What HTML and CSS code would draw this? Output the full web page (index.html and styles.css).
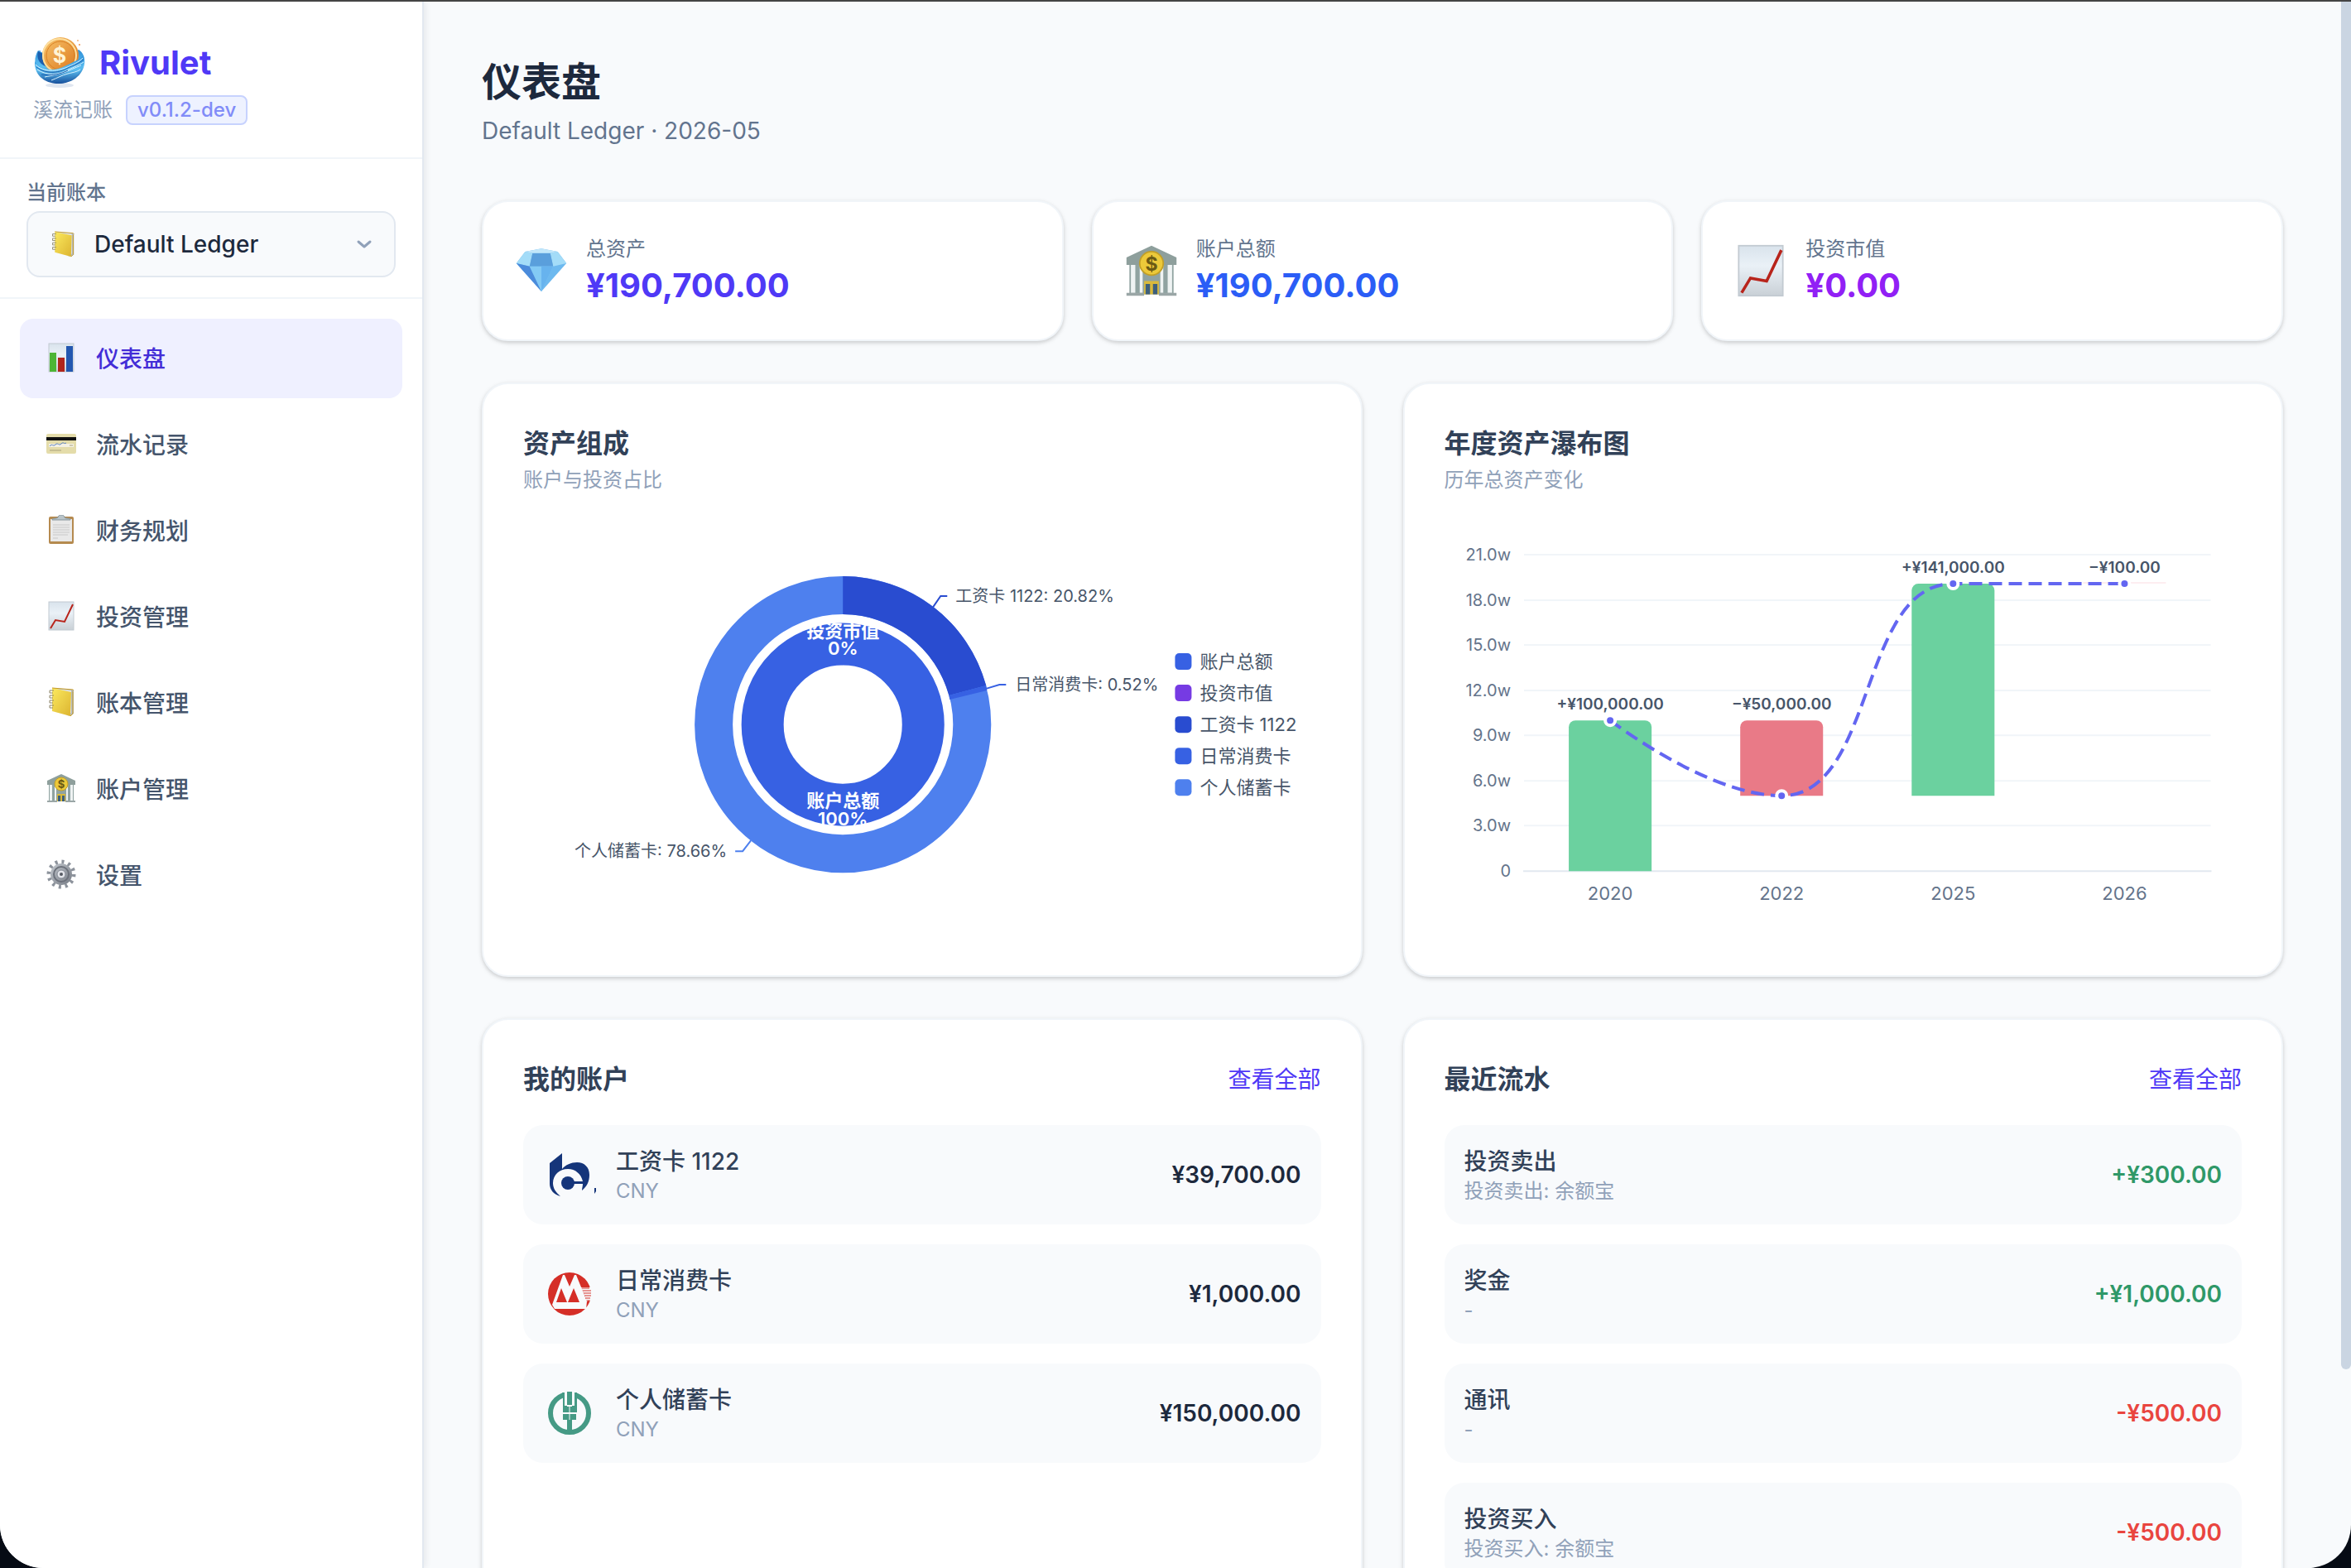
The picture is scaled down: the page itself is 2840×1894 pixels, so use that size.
FILE: index.html
```html
<!DOCTYPE html>
<html lang="zh-CN">
<head>
    <meta charset="UTF-8">
    <meta name="viewport" content="width=device-width, initial-scale=1.0">
    <title>Rivulet 溪流记账 - 仪表盘</title>
    <link rel="stylesheet" href="styles.css">
</head>
<body>
    <!-- 图标定义 -->
    <svg class="defs" width="0" height="0" aria-hidden="true">
        <defs>
            <linearGradient id="paper" x1="0" y1="0" x2="0" y2="1"><stop offset="0" stop-color="#d9e3ec"/><stop offset=".4" stop-color="#eaf1f7"/><stop offset="1" stop-color="#c9d0d6"/></linearGradient>
            <linearGradient id="gold" x1="0" y1="0" x2="1" y2="1"><stop offset="0" stop-color="#fbe95e"/><stop offset="1" stop-color="#dcb430"/></linearGradient>
            <linearGradient id="coin" x1="0" y1="0" x2="1" y2="1"><stop offset="0" stop-color="#f9c56b"/><stop offset="1" stop-color="#d9741a"/></linearGradient>
            <linearGradient id="water" x1="0" y1="0" x2="0" y2="1"><stop offset="0" stop-color="#2f8fd8"/><stop offset=".5" stop-color="#5cc0f2"/><stop offset="1" stop-color="#17509c"/></linearGradient>
            <linearGradient id="steel" x1="0" y1="0" x2="1" y2="1"><stop offset="0" stop-color="#c3c8ce"/><stop offset="1" stop-color="#747a83"/></linearGradient>
            <symbol id="i-chart" viewBox="0 0 36 36">
                <rect x="3" y="1" width="30" height="34" fill="url(#paper)" stroke="#c2cad1"/>
                <rect x="4" y="12" width="8" height="23" fill="#4db536"/>
                <rect x="14" y="18" width="8" height="17" fill="#b0251c"/>
                <rect x="24" y="4" width="8" height="31" fill="#2357b0"/>
            </symbol>
            <symbol id="i-card" viewBox="0 0 36 36">
                <rect x="0" y="6" width="36" height="24" rx="2" fill="#e4dcaa"/>
                <rect x="0" y="10" width="36" height="4" fill="#111"/>
                <rect x="3" y="18" width="30" height="4" fill="#f4f1e4"/>
                <path d="M4 21c3-4 4 1 7-2s4 2 7-1 3 1 6-1" fill="none" stroke="#5a82c4"/>
                <path d="M28 20h4M4 26h14" stroke="#a9a27a"/>
            </symbol>
            <symbol id="i-board" viewBox="0 0 36 36">
                <rect x="3" y="2" width="30" height="33" rx="2" fill="#b58a4f"/>
                <rect x="5" y="5" width="26" height="27" fill="#e9e9e9"/>
                <path d="M8 12h20M8 15h20M8 18h20M8 21h20M8 24h18M8 28h6" stroke="#c9c9c9"/>
                <path d="M7 6c0-3 5-1 7-3 0-4 8-4 8 0 2 2 7 0 7 3z" fill="#b9c4c9" stroke="#87969c"/>
            </symbol>
            <symbol id="i-trend" viewBox="0 0 36 36">
                <rect x="3" y="1" width="30" height="34" fill="url(#paper)" stroke="#c2cad1"/>
                <path d="M5 33l6-10 11 2L32 4" fill="none" stroke="#b8241b" stroke-width="2"/>
            </symbol>
            <symbol id="i-book" viewBox="0 0 36 36">
                <path d="M7 1l25 2 1 1v28l-4 3-4-1z" fill="#b5bbbf"/>
                <path d="M10 2l20 2v27l-3 2z" fill="#e4e7e9"/>
                <path d="M7 1l23 5-1 29-22-6z" fill="url(#gold)"/>
                <path d="M7 1l25 2 1 1M32 5v27l-3 3" fill="none" stroke="#c79a1e"/>
                <path d="M9 4H4v3h4M9 10H4v3h4M9 16H4v3h4M9 22H4v3h4" fill="none" stroke="#8c8468"/>
            </symbol>
            <symbol id="i-bank" viewBox="0 0 36 36">
                <path d="M1 9L18 1l17 8v5H1z" fill="#8e9f9c"/>
                <path d="M3 14h30v20H3z" fill="#90a3a1"/>
                <path d="M4 14h3v19H4zM10 14h2v19h-2zM24 14h2v19h-2zM29 14h3v19h-3z" fill="#eff3f3"/>
                <path d="M1 33h12v2H1zM23 33h12v2H23z" fill="#9aa6a6"/>
                <path d="M13 25h10v9H13z" fill="#d9b93b"/>
                <path d="M14 27h3v7h-3zM19 27h3v7h-3z" fill="#3d5f7c"/>
                <circle cx="18" cy="13" r="8" fill="#ecc93a" stroke="#c29f27"/>
                <text x="18" y="18" class="coin-sign">$</text>
            </symbol>
            <symbol id="i-gear" viewBox="0 0 36 36">
                <circle cx="18" cy="18" r="15" fill="none" stroke="#8d939c" stroke-width="5" stroke-dasharray="3 4.854"/>
                <circle cx="18" cy="18" r="13" fill="url(#steel)"/>
                <circle cx="18" cy="18" r="9" fill="none" stroke="#6c717b" stroke-width="2"/>
                <circle cx="18" cy="18" r="5" fill="#e3e5ea" stroke="#868c97"/>
                <circle cx="18" cy="18" r="2" fill="#555a63"/>
            </symbol>
            <symbol id="i-gem" viewBox="0 0 36 36">
                <path d="M7 5l11-2 11 2 6 8-17 19L1 13z" fill="#6db9ef"/>
                <path d="M7 5l5 1-2 9-9-2zM29 5l-5 1 2 9 9-2z" fill="#a3dcf8"/>
                <path d="M12 6h12l2 9H10z" fill="#5a9fdc"/>
                <path d="M7 5l11-2 11 2-5 1H12z" fill="#c2e7fa"/>
                <path d="M1 13l9 2 8 17z" fill="#4b8bdb"/>
                <path d="M10 15h16l-8 17z" fill="#83caf5"/>
                <path d="M18 15l8 0-8 17z" fill="#67b3ee"/>
            </symbol>
        </defs>
    </svg>

    <div class="app">
        <aside class="sidebar">
            <div class="brand">
                <div class="brand-row">
                    <svg class="brand-logo" viewBox="0 0 64 64" aria-hidden="true">
                        <ellipse cx="32" cy="59" rx="17" ry="3" fill="#dfe6f0"/>
                        <path d="M6 17C-2 30 2 50 28 57c22 1 36-14 34-30-1-6-4-9-7-11L32 30z" fill="url(#water)"/>
                        <path d="M6 18c-3 12 5 18 16 20l-8-16z" fill="#1c5fae"/>
                        <circle cx="33" cy="23" r="22" fill="url(#coin)"/>
                        <circle cx="32" cy="23" r="20" fill="none" stroke="#fde0a0" stroke-width="2"/>
                        <circle cx="33" cy="23" r="17" fill="none" stroke="#d98125"/>
                        <text x="32" y="32" class="logo-sign">$</text>
                        <path d="M2 30c8 12 24 12 36 6s18-8 23-13c2 18-12 33-30 34C12 57 1 45 2 30z" fill="url(#water)"/>
                        <path d="M3 34c10 10 26 8 36 4s16-7 21-12M5 40c12 8 26 6 36 1s14-6 20-10M14 49c10-2 22-4 30-8s10-4 14-6M22 53c8-3 12-6 20-8s10-2 15-5" fill="none" stroke="#d9f2fd" stroke-width="1"/>
                        <path d="M4 37c12 9 26 7 36 2s15-6 21-11M10 46c14 2 24-1 32-5" fill="none" stroke="#1d62b0"/>
                        <circle cx="56" cy="10" r="1" fill="#f0914d"/><circle cx="54" cy="5" r="1" fill="#f3b27f"/><circle cx="8" cy="18" r="1" fill="#3f9be0"/>
                    </svg>
                    <span class="brand-name">Rivulet</span>
                </div>
                <div class="brand-meta">
                    <span>溪流记账</span>
                    <span class="version">v0.1.2-dev</span>
                </div>
            </div>

            <div class="ledger">
                <label for="ledgerSelect">当前账本</label>
                <div class="select-wrap">
                    <svg class="select-icon" aria-hidden="true"><use href="#i-book"/></svg>
                    <select id="ledgerSelect">
                        <option>Default Ledger</option>
                    </select>
                    <svg class="select-arrow" viewBox="0 0 20 12" aria-hidden="true"><path d="M3 3l7 6 7-6" fill="none" stroke="#90a1b9" stroke-width="3" stroke-linecap="round" stroke-linejoin="round"/></svg>
                </div>
            </div>

            <nav class="menu">
                <a href="#dashboard" class="active"><svg aria-hidden="true"><use href="#i-chart"/></svg>仪表盘</a>
                <a href="#records"><svg aria-hidden="true"><use href="#i-card"/></svg>流水记录</a>
                <a href="#plan"><svg aria-hidden="true"><use href="#i-board"/></svg>财务规划</a>
                <a href="#invest"><svg aria-hidden="true"><use href="#i-trend"/></svg>投资管理</a>
                <a href="#ledgers"><svg aria-hidden="true"><use href="#i-book"/></svg>账本管理</a>
                <a href="#accounts"><svg aria-hidden="true"><use href="#i-bank"/></svg>账户管理</a>
                <a href="#settings"><svg aria-hidden="true"><use href="#i-gear"/></svg>设置</a>
            </nav>
        </aside>

        <main class="content">
            <header class="page-header">
                <h1>仪表盘</h1>
                <p>Default Ledger · 2026-05</p>
            </header>

            <section class="stats">
                <div class="card stat">
                    <svg aria-hidden="true"><use href="#i-gem"/></svg>
                    <div>
                        <div class="stat-label">总资产</div>
                        <div class="stat-value indigo">¥190,700.00</div>
                    </div>
                </div>
                <div class="card stat">
                    <svg aria-hidden="true"><use href="#i-bank"/></svg>
                    <div>
                        <div class="stat-label">账户总额</div>
                        <div class="stat-value blue">¥190,700.00</div>
                    </div>
                </div>
                <div class="card stat">
                    <svg aria-hidden="true"><use href="#i-trend"/></svg>
                    <div>
                        <div class="stat-label">投资市值</div>
                        <div class="stat-value purple">¥0.00</div>
                    </div>
                </div>
            </section>

            <section class="panels">
                <div class="card panel">
                    <h2>资产组成</h2>
                    <p class="hint">账户与投资占比</p>
                    <!-- 双层环形图 -->
                    <svg class="chart" viewBox="0 0 963 518" role="img" aria-label="资产组成">
                        <circle cx="386" cy="263" r="156" fill="none" stroke="#4e80ee" stroke-width="46"/>
                        <path d="M386 84A179 179 0 0 1 559 216L514 228A133 133 0 0 0 386 130z" fill="#294cd0"/>
                        <path d="M559 216A179 179 0 0 1 560 222L515 233A133 133 0 0 0 514 228z" fill="#3761e3"/>
                        <circle cx="386" cy="263" r="97" fill="none" stroke="#3761e3" stroke-width="51"/>
                        <g fill="none" stroke-width="2">
                            <path d="M495 121l9-13h8" stroke="#294cd0"/>
                            <path d="M558 220l17-5h8" stroke="#3761e3"/>
                            <path d="M275 403l-10 13h-9" stroke="#4e80ee"/>
                        </g>
                        <g class="slice-label">
                            <text x="522" y="115">工资卡 1122: 20.82%</text>
                            <text x="594" y="222">日常消费卡: 0.52%</text>
                            <text x="246" y="423" text-anchor="end">个人储蓄卡: 78.66%</text>
                        </g>
                        <g class="ring-label">
                            <text x="386" y="158">投资市值</text>
                            <text x="386" y="179">0%</text>
                            <text x="386" y="363">账户总额</text>
                            <text x="386" y="385">100%</text>
                        </g>
                        <g>
                            <rect x="787" y="177" width="20" height="20" rx="5" fill="#3761e3"/>
                            <rect x="787" y="215" width="20" height="20" rx="5" fill="#763be3"/>
                            <rect x="787" y="253" width="20" height="20" rx="5" fill="#294cd0"/>
                            <rect x="787" y="291" width="20" height="20" rx="5" fill="#3761e3"/>
                            <rect x="787" y="329" width="20" height="20" rx="5" fill="#4e80ee"/>
                        </g>
                        <g class="legend-label">
                            <text x="817" y="195">账户总额</text>
                            <text x="817" y="233">投资市值</text>
                            <text x="817" y="271">工资卡 1122</text>
                            <text x="817" y="309">日常消费卡</text>
                            <text x="817" y="347">个人储蓄卡</text>
                        </g>
                    </svg>
                </div>

                <div class="card panel">
                    <h2>年度资产瀑布图</h2>
                    <p class="hint">历年总资产变化</p>
                    <!-- 瀑布图 -->
                    <svg class="chart" viewBox="0 0 963 518" role="img" aria-label="年度资产瀑布图">
                        <path d="M96 58h829M96 113h829M96 167h829M96 222h829M96 276h829M96 331h829M96 385h829" stroke="#f1f5f9" stroke-width="2"/>
                        <path d="M95 440h831" stroke="#e2e8f0" stroke-width="2"/>
                        <g class="axis-y">
                            <text x="80" y="65">21.0w</text>
                            <text x="80" y="120">18.0w</text>
                            <text x="80" y="174">15.0w</text>
                            <text x="80" y="229">12.0w</text>
                            <text x="80" y="283">9.0w</text>
                            <text x="80" y="338">6.0w</text>
                            <text x="80" y="392">3.0w</text>
                            <text x="80" y="447">0</text>
                        </g>
                        <g class="axis-x">
                            <text x="200" y="475">2020</text>
                            <text x="407" y="475">2022</text>
                            <text x="614" y="475">2025</text>
                            <text x="821" y="475">2026</text>
                        </g>
                        <path d="M150 440V266a8 8 0 0 1 8-8h84a8 8 0 0 1 8 8V440z" fill="#6bd19f"/>
                        <path d="M357 349V266a8 8 0 0 1 8-8h84a8 8 0 0 1 8 8V349z" fill="#e97a87"/>
                        <path d="M564 349V101a8 8 0 0 1 8-8h84a8 8 0 0 1 8 8V349z" fill="#6bd19f"/>
                        <path d="M771 92h100" stroke="#fbdce2"/>
                        <path d="M200 258C200 258 318 349 407 349C521 349 500 93 614 93H821" fill="none" stroke="#6366f1" stroke-width="4" stroke-dasharray="16 8"/>
                        <g fill="#6366f1" stroke="#fff" stroke-width="4">
                            <circle cx="200" cy="258" r="6"/>
                            <circle cx="407" cy="349" r="6"/>
                            <circle cx="614" cy="93" r="6"/>
                            <circle cx="821" cy="93" r="6"/>
                        </g>
                        <g class="bar-label">
                            <text x="200" y="245">+¥100,000.00</text>
                            <text x="407" y="245">−¥50,000.00</text>
                            <text x="614" y="80">+¥141,000.00</text>
                            <text x="821" y="80">−¥100.00</text>
                        </g>
                    </svg>
                </div>

                <div class="card panel">
                    <div class="panel-head">
                        <h2>我的账户</h2>
                        <a href="#accounts">查看全部</a>
                    </div>
                    <ul class="rows">
                        <li>
                            <svg class="bank-logo" viewBox="0 0 64 64" aria-hidden="true">
                                <path d="M23 6L8 18V43c0 7 5 13 13 15-6-5-9-10-9-16 0-10 8-17 18-17 9 0 16 6 18 15H37v3h11c0 3-1 5-1 8 6-5 9-11 9-19 0-9-6-15-15-15-7 0-14 3-18 8z" fill="#15357a"/>
                                <circle cx="30" cy="42" r="8" fill="#15357a"/>
                                <path d="M62 48h2v4l-2 3z" fill="#15357a"/>
                            </svg>
                            <div class="row-text"><strong>工资卡 1122</strong><span>CNY</span></div>
                            <b>¥39,700.00</b>
                        </li>
                        <li>
                            <svg class="bank-logo" viewBox="0 0 64 64" aria-hidden="true">
                                <circle cx="32" cy="32" r="26" fill="#d52e27"/>
                                <path d="M11 45L24 9h2l6 14 6-14h2l13 32-1 9H14z" fill="#f8fafc"/>
                                <path d="M16 42l6-17 7 17zM30 42l7-17 7 17z" fill="#d52e27"/>
                                <path d="M46 24h12v15l-5 2z" fill="#f8fafc"/>
                                <path d="M47 25h9M48 28h10M49 31h9M50 34h8M51 37h6M53 40h3" stroke="#d52e27"/>
                            </svg>
                            <div class="row-text"><strong>日常消费卡</strong><span>CNY</span></div>
                            <b>¥1,000.00</b>
                        </li>
                        <li>
                            <svg class="bank-logo" viewBox="0 0 64 64" aria-hidden="true">
                                <circle cx="32" cy="32" r="23" fill="none" stroke="#459a85" stroke-width="6"/>
                                <path d="M25 4h14v24H25z" fill="#f8fafc"/>
                                <path d="M29 6h6v16h-6z" fill="#459a85"/>
                                <path d="M23 7h3v16h3v1h6v-1h3V7h3v24H24V10zM24 33h16v7h-5v17h-6V40h-5z" fill="#459a85"/>
                                <path d="M32 24v16" stroke="#f8fafc"/>
                            </svg>
                            <div class="row-text"><strong>个人储蓄卡</strong><span>CNY</span></div>
                            <b>¥150,000.00</b>
                        </li>
                    </ul>
                </div>

                <div class="card panel">
                    <div class="panel-head">
                        <h2>最近流水</h2>
                        <a href="#records">查看全部</a>
                    </div>
                    <ul class="rows">
                        <li>
                            <div class="row-text"><strong>投资卖出</strong><span>投资卖出: 余额宝</span></div>
                            <b class="income">+¥300.00</b>
                        </li>
                        <li>
                            <div class="row-text"><strong>奖金</strong><span>-</span></div>
                            <b class="income">+¥1,000.00</b>
                        </li>
                        <li>
                            <div class="row-text"><strong>通讯</strong><span>-</span></div>
                            <b class="expense">-¥500.00</b>
                        </li>
                        <li>
                            <div class="row-text"><strong>投资买入</strong><span>投资买入: 余额宝</span></div>
                            <b class="expense">-¥500.00</b>
                        </li>
                    </ul>
                </div>
            </section>
        </main>
        <div class="scroll-thumb"></div>
    </div>
</body>
</html>
```
FILE: styles.css
```css
* { box-sizing: border-box; margin: 0; padding: 0; }
body { font-family: Inter, "Noto Sans CJK SC", sans-serif; font-size: 28px; color: #1d293d; background: #060b14; overflow: hidden; }
a { text-decoration: none; }
ul { list-style: none; }
.defs { position: absolute; }

.app { position: relative; display: flex; height: 100vh; overflow: hidden; background: #f8fafc; border-top: 2px solid #444; border-radius: 0 0 52px 52px; }

/* 侧边栏 */
.sidebar { position: relative; flex: none; width: 512px; background: #fff; border-right: 2px solid #e2e8f0; box-shadow: 2px 0 8px rgba(15, 23, 42, 0.08); }
.brand { padding: 42px 40px 39px; border-bottom: 2px solid #f1f5f9; }
.brand-row { display: flex; align-items: center; gap: 16px; height: 64px; }
.brand-logo { width: 64px; height: 64px; }
.brand-name { font-size: 40px; font-weight: 700; line-height: 48px; color: #4f39f6; }
.logo-sign { font-size: 25px; font-weight: 700; text-anchor: middle; fill: #fff4d6; }
.coin-sign { font-size: 13px; font-weight: 700; text-anchor: middle; fill: #6b5a14; }
.brand-meta { display: flex; align-items: center; gap: 16px; margin-top: 7px; font-size: 24px; line-height: 36px; color: #90a1b9; }
.version { padding: 0 12px; font-size: 24px; font-weight: 500; line-height: 32px; color: #818cf8; background: #eef2ff; border: 2px solid #c7d2fe; border-radius: 8px; }

.ledger { padding: 25px 32px 24px; border-bottom: 2px solid #f1f5f9; }
.ledger label { display: block; margin-bottom: 6px; font-size: 24px; font-weight: 500; line-height: 32px; color: #62748e; }
.select-wrap { position: relative; }
.select-wrap select { display: block; width: 100%; height: 80px; padding: 0 80px; font: inherit; font-weight: 500; color: #1d293d; background: #f8fafc; border: 2px solid #e2e8f0; border-radius: 16px; appearance: none; }
.select-icon { position: absolute; left: 28px; top: 24px; width: 32px; height: 32px; }
.select-arrow { position: absolute; right: 28px; top: 34px; width: 20px; height: 12px; }

.menu { display: flex; flex-direction: column; gap: 8px; padding: 24px; }
.menu a { display: flex; align-items: center; gap: 24px; height: 96px; padding: 0 32px 2px; font-weight: 500; color: #45556c; border-radius: 16px; }
.menu a.active { color: #432dd7; background: #eff0ff; }
.menu svg { width: 36px; height: 36px; }

/* 主内容 */
.content { flex: 1; min-width: 0; padding: 69px 82px 70px 70px; }
.page-header { margin-bottom: 64px; }
.page-header h1 { font-size: 48px; font-weight: 700; line-height: 56px; }
.page-header p { line-height: 40px; margin-top: 11px; color: #62748e; }

.card { background: #fff; border: 2px solid #f1f5f9; border-radius: 32px; box-shadow: 0 2px 6px rgba(0, 0, 0, 0.1), 0 2px 4px rgba(0, 0, 0, 0.1); }
.stats { display: grid; grid-template-columns: repeat(3, 1fr); gap: 34px; margin-bottom: 50px; }
.stat { display: flex; align-items: center; gap: 22px; height: 170px; padding: 0 38px; }
.stat svg { width: 64px; height: 64px; }
.stat-label { font-size: 24px; line-height: 36px; color: #62748e; }
.stat-value { font-size: 40px; font-weight: 700; line-height: 52px; }
.indigo { color: #4f39f6; }
.blue { color: #2b5df6; }
.purple { color: #9120f5; }

.panels { display: grid; grid-template-columns: repeat(2, 1fr); gap: 50px 49px; }
.panel { padding: 48px; }
.panel h2 { font-size: 32px; font-weight: 600; line-height: 48px; color: #314158; }
.hint { font-size: 24px; line-height: 40px; color: #90a1b9; }
.chart { display: block; width: 100%; margin-top: 12px; }
.slice-label { font-size: 20px; fill: #475569; }
.ring-label { font-size: 22px; font-weight: 600; text-anchor: middle; fill: #fff; }
.legend-label { font-size: 22px; fill: #475569; }
.axis-y { font-size: 20px; text-anchor: end; fill: #64748b; }
.axis-x { font-size: 22px; text-anchor: middle; fill: #64748b; }
.bar-label { font-size: 19px; font-weight: 600; text-anchor: middle; fill: #475569; }

.panel-head { display: flex; justify-content: space-between; align-items: center; margin-bottom: 31px; }
.panel-head a { line-height: 40px; color: #4f39f6; }
.rows { display: flex; flex-direction: column; gap: 24px; }
.rows li { display: flex; align-items: center; gap: 24px; padding: 24px; background: #f8fafc; border-radius: 24px; }
.bank-logo { width: 64px; height: 64px; }
.row-text { display: flex; flex: 1; flex-direction: column; }
.row-text strong { font-weight: 500; line-height: 40px; color: #314158; }
.row-text span { font-size: 24px; line-height: 32px; color: #90a1b9; }
.rows b { font-weight: 600; }
.rows .income { color: #2f9868; }
.rows .expense { color: #e9453f; }

.scroll-thumb { position: absolute; top: 0; right: 0; width: 12px; height: 87.3%; background: #cad5e2; border-radius: 0 0 6px 6px; }
```
